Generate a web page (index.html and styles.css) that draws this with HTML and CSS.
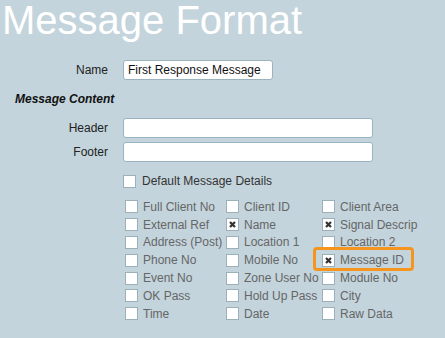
FILE: index.html
```html
<!DOCTYPE html>
<html lang="en">
<head>
    <meta charset="UTF-8">
    <meta name="viewport" content="width=device-width, initial-scale=1.0">
    <title>Message Format</title>
    <link rel="stylesheet" href="styles.css">
</head>
<body>
    <h1 class="title">Message Format</h1>

    <div class="form-row name-row">
        <label>Name</label>
        <input type="text" class="name-input" value="First Response Message">
    </div>

    <h3 class="section">Message Content</h3>

    <div class="form-row">
        <label>Header</label>
        <input type="text" class="wide-input">
    </div>
    <div class="form-row footer-row">
        <label>Footer</label>
        <input type="text" class="wide-input">
    </div>

    <div class="default-row">
        <span class="box"></span>
        <span>Default Message Details</span>
    </div>

    <div class="fields">
        <div class="cell"><span class="box"></span>Full Client No</div>
        <div class="cell"><span class="box"></span>Client ID</div>
        <div class="cell"><span class="box"></span>Client Area</div>

        <div class="cell"><span class="box"></span>External Ref</div>
        <div class="cell"><span class="box checked"><svg viewBox="0 0 11 11"><path d="M3 3l5 5M8 3l-5 5"/></svg></span>Name</div>
        <div class="cell"><span class="box checked"><svg viewBox="0 0 11 11"><path d="M3 3l5 5M8 3l-5 5"/></svg></span>Signal Descrip</div>

        <div class="cell"><span class="box"></span>Address (Post)</div>
        <div class="cell"><span class="box"></span>Location 1</div>
        <div class="cell"><span class="box"></span>Location 2</div>

        <div class="cell"><span class="box"></span>Phone No</div>
        <div class="cell"><span class="box"></span>Mobile No</div>
        <div class="cell highlight"><span class="box checked"><svg viewBox="0 0 11 11"><path d="M3 3l5 5M8 3l-5 5"/></svg></span>Message ID</div>

        <div class="cell"><span class="box"></span>Event No</div>
        <div class="cell"><span class="box"></span>Zone User No</div>
        <div class="cell"><span class="box"></span>Module No</div>

        <div class="cell"><span class="box"></span>OK Pass</div>
        <div class="cell"><span class="box"></span>Hold Up Pass</div>
        <div class="cell"><span class="box"></span>City</div>

        <div class="cell"><span class="box"></span>Time</div>
        <div class="cell"><span class="box"></span>Date</div>
        <div class="cell"><span class="box"></span>Raw Data</div>
    </div>
</body>
</html>
```

FILE: styles.css
```css
body {
    margin: 0;
    background-color: #c3d4dc;
    font-family: "Liberation Sans", Arial, sans-serif;
    font-size: 12px;
    color: #222;
}
.title {
    margin: 0 0 0 2px;
    font-size: 40px;
    line-height: 40px;
    font-weight: normal;
    color: #fff;
}
.form-row {
    display: grid;
    grid-template-columns: 108px auto;
    column-gap: 15px;
    align-items: center;
    justify-content: start;
}
.form-row label {
    text-align: right;
}
.name-row {
    margin-top: 20px;
}
.footer-row {
    margin-top: 4px;
}
input {
    box-sizing: border-box;
    height: 20px;
    margin: 0;
    padding: 0 4px;
    border: 1px solid #9bb2bf;
    border-radius: 3px;
    background: #fff;
    font-family: "Liberation Sans", Arial, sans-serif;
    font-size: 12px;
    color: #111;
}
.name-input {
    width: 150px;
}
.wide-input {
    width: 250px;
}
.section {
    margin: 12px 0 12px 15px;
    font-size: 12px;
    line-height: 14px;
    font-weight: bold;
    font-style: italic;
    color: #111;
}
.default-row {
    display: flex;
    align-items: center;
    gap: 6px;
    margin: 12px 0 0 123px;
    color: #333;
}
.box {
    box-sizing: border-box;
    display: inline-flex;
    width: 13px;
    height: 13px;
    border: 1px solid #9cb0ba;
    background: #fff;
}
.box svg {
    width: 11px;
    height: 11px;
}
.box path {
    fill: none;
    stroke: #333;
    stroke-width: 2.2;
}
.fields {
    display: grid;
    grid-template-columns: 101px 96px auto;
    grid-auto-rows: 17.8px;
    margin: 10px 0 0 125px;
    color: #666;
}
.cell {
    display: flex;
    align-items: center;
    gap: 5px;
    white-space: nowrap;
}
.highlight {
    position: relative;
    justify-self: start;
}
.highlight::after {
    content: "";
    position: absolute;
    top: -4px;
    right: -10px;
    bottom: -2px;
    left: -9px;
    border: 3px solid #f5951e;
    border-radius: 4px;
}
```
